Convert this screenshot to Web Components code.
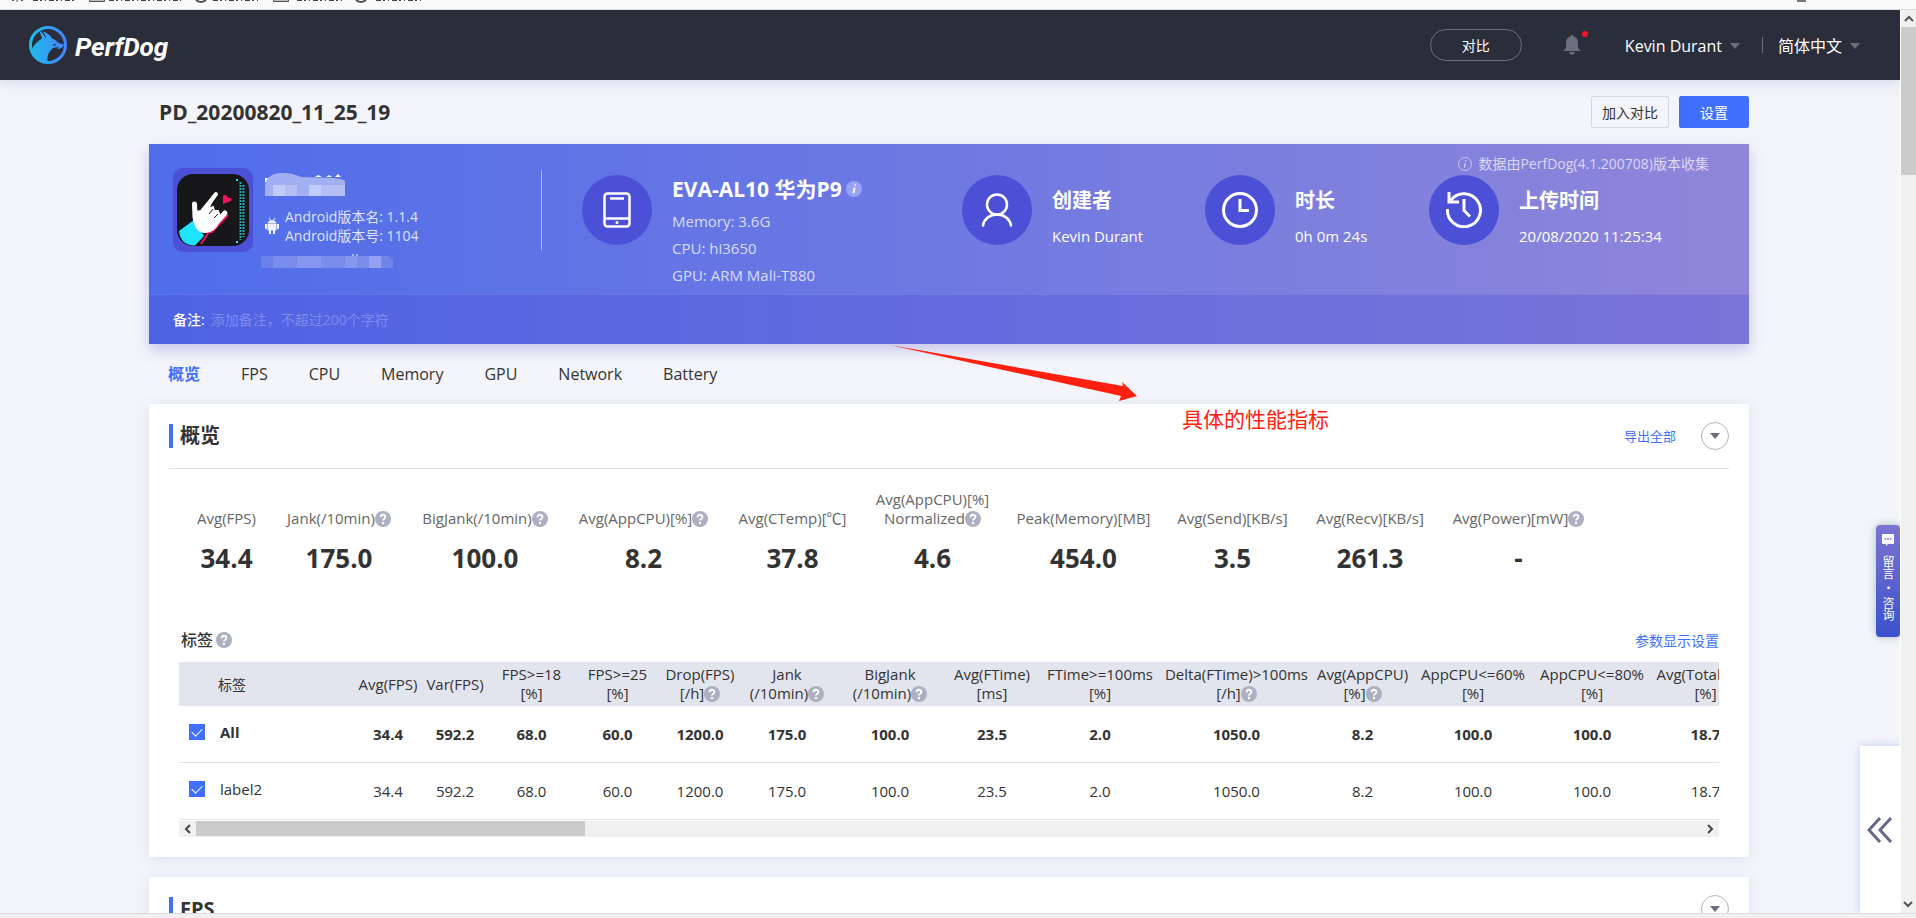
<!DOCTYPE html>
<html lang="zh-CN">
<head>
<meta charset="utf-8">
<title>PerfDog - PD_20200820_11_25_19</title>
<style>
html, body { margin: 0; height: 100%; }
body { font-family: "Open Sans", "Noto Sans CJK SC", sans-serif; font-size: 14px; line-height: 19px; color: #333; background: #f4f5fa; overflow: hidden; }
</style>
</head>
<body>
<perf-app></perf-app>
<script>
const define = (name, html, setup) => {
  const tpl = document.createElement('template');
  tpl.innerHTML = '<style>*{box-sizing:border-box}button,input,select{font:inherit;color:inherit;margin:0}a{text-decoration:none}svg{display:block}</style>' + html;
  customElements.define(name, class extends HTMLElement {
    constructor() {
      super();
      this.attachShadow({ mode: 'open' }).append(tpl.content.cloneNode(true));
    }
    connectedCallback() { if (setup && !this.ready) { this.ready = true; setup(this, this.shadowRoot); } }
  });
};

/* Round question mark beside a metric name */
define('help-icon', `
<style>:host{display:inline-block;width:16px;height:16px;vertical-align:-3px}</style>
<svg width="16" height="16" viewBox="0 0 16 16"><circle cx="8" cy="8" r="8" fill="#acb0c0"/><path d="M5.6 6.2C5.6 3 10.4 3 10.4 6C10.4 7.8 8 7.7 8 9.6" fill="none" stroke="#fff" stroke-width="1.9"/><circle cx="8" cy="12" r="1.2" fill="#fff"/></svg>`);

/* Lower edge of the browser's bookmark bar */
define('bookmark-strip', `
<style>:host{display:block;height:10px;background:#fafafa;border-bottom:1px solid #dcdde0;overflow:hidden;grid-column:1/-1}
svg{width:1916px}</style>
<svg height="9" viewBox="0 0 1916 9" fill="none" stroke="#555">
<path d="M12 .5h2M17 0v2M21 .5h2" /><path d="M33 .5h42M109 .5h72M213 .5h48M297 .5h45M376 .5h46" stroke="#444" stroke-dasharray="5 2 2 3 1 3"/>
<path d="M89.500 0v1.500h15V0M273.500 0v1.500h15V0" fill="#bbb"/>
<path d="M196 0q5 4 10 0M356 0q5 4 10 0" stroke-width="2"/><path d="M1797 1h9" stroke="#777" stroke-width="2"/></svg>`);

define('brand-logo', `
<style>:host{display:flex;align-items:center;gap:8px}
span{font:italic 700 26px/34px Roboto,"Open Sans",sans-serif;color:#fff;padding-top:4px}</style>
<svg width="38" height="38" viewBox="0 0 38 38">
<defs><linearGradient id="g"><stop offset="0" stop-color="#21b9e9"/><stop offset="1" stop-color="#4486ff"/></linearGradient></defs>
<circle cx="19" cy="19" r="17.500" fill="none" stroke="url(#g)" stroke-width="3"/>
<path d="M3 24C5 18 9 15 13 12.500L10.500 5C13 6 14.500 8 16 11L17 12C16.500 9 15 7 13.500 5.500C18 6.500 21 9 23 12.500C27 13.500 29 17 31 17.500L35 18.500C34 22 31 23 28 23L30 21.500C26 21 24 22 22 24C19 27 18 31 18.500 36C10 36 4 31 3 24Z" fill="url(#g)"/>
<path d="M23.500 19l4-1.500-2 2.500z" fill="#2a2d3a"/></svg>
<span>PerfDog</span>`);

define('top-bar', `
<style>:host{display:flex;align-items:center;height:70px;padding:0 40px 0 29px;background:#2a2d3a;color:#fff;position:relative;z-index:2;box-shadow:0 2px 14px rgba(70,80,170,.2)}
brand-logo{margin-right:auto}
button{background:none;border:0;padding:0}
.cmp{width:92px;height:32px;border:1px solid #6c6e80;border-radius:16px;font-size:14px}
.bell{position:relative;margin:0 44px 0 41px;width:18px}
.bell i{position:absolute;right:-7px;top:-4px;width:6px;height:6px;border-radius:50%;background:#f5122f}
.user{display:flex;align-items:center;gap:8px;font-size:16px;line-height:24px;padding-top:2px}
.tri{width:0;border:5px solid transparent;border-top:6px solid #6c6e80;border-bottom:0}
.sep{width:1px;height:16px;background:#6c6e80;margin:0 15px 0 22px}
label{display:flex;align-items:center;padding-top:2px}
select{appearance:none;background:none;border:0;font-size:16px;line-height:24px;padding:0;width:72px}</style>
<brand-logo></brand-logo>
<button class="cmp">对比</button>
<button class="bell" aria-label="notifications"><svg width="18" height="20" viewBox="0 0 18 20" fill="#6c6e80"><path d="M9 0c1 0 1.500.6 1.600 1.500C13.700 2.200 15 4.500 15 7.500V13l3 3H0l3-3V7.500C3 4.500 4.300 2.200 7.400 1.500 7.500.6 8 0 9 0zM6 17h6c-.5 3.500-5.500 3.500-6 0z"/></svg><i></i></button>
<button class="user">Kevin Durant<span class="tri"></span></button>
<span class="sep"></span>
<label><select aria-label="language"><option>简体中文</option></select><span class="tri"></span></label>`);

define('page-title', `
<style>:host{display:flex;align-items:center;gap:10px;height:64px;padding-left:10px}
h1{margin:0 auto 0 0;font-size:21px;line-height:28px}
button{height:32px;border-radius:2px;border:1px solid #d4d6df;background:none;width:78px;padding:0}
.main{width:70px;background:#4170ff;border-color:#4170ff;color:#fff}</style>
<h1>PD_20200820_11_25_19</h1><button>加入对比</button><button class="main">设置</button>`);

/* Round icon beside a heading and its detail lines */
define('info-block', `
<style>:host{display:flex;gap:20px;padding-top:31px;color:#fff;min-width:0}
.disc{flex:none;width:70px;height:70px;border-radius:50%;background:#4b50d6;display:grid;place-items:center}
.text{white-space:nowrap;padding-top:12px}
:host([rich]) .text{padding-top:0}
h2{margin:0 0 9px;font-size:20px;line-height:28px;display:flex;align-items:center;gap:4px}
:host([rich]) h2{margin-bottom:5px;font-size:21px}
:host([rich]) .body{line-height:27px;color:rgba(255,255,255,.75)}
.body{font-size:15px;line-height:24px}</style>
<div class="disc"><slot name="icon"></slot></div>
<div class="text"><h2><slot name="title"></slot></h2><div class="body"><slot></slot></div></div>`);

define('app-block', `
<style>:host{display:flex;padding:24px 0 0 24px}
.icon{width:80px;height:84px;border-radius:10px;background:#4b50d6;display:grid;place-items:center;flex:none}
.text{flex:1;padding:5px 0 0 8px;color:rgba(255,255,255,.82);white-space:nowrap}
.line{display:flex;align-items:center;gap:6px;padding:11px 0 0 4px}
.rule{width:1px;height:80px;background:rgba(255,255,255,.5);margin:2px 40px 0 0}
.name{margin-left:4px}.pkg{margin-top:9px}</style>
<div class="icon"><svg width="72" height="72" viewBox="0 0 72 72"><rect width="72" height="72" rx="16" fill="#171719"/>
<path d="M2 57L17 46 27 62 18 71.500C8 71.500 3 66 2 57Z" fill="#20e4ff"/><path d="M24 70l8-12h3l16-17" fill="none" stroke="#f4145e" stroke-width="2"/>
<path d="M17.500 30L18 43Q20 57 29 56.500 36 56 40 48L48 39" fill="none" stroke="#fff" stroke-width="5" stroke-linecap="round" stroke-linejoin="round"/>
<path d="M18 38L24 37 38 20 31 35 36 33 37 37 41 37 43 43 35 55 24 56Z" fill="#fff" stroke="#fff" stroke-width="2"/><path d="M26 38L39 20" stroke="#fff" stroke-width="4" stroke-linecap="round"/>
<path d="M32 40l4-5M37 44l4-4" stroke="#171719" stroke-width="1"/>
<path d="M46 22q4-3 5 2 5-1 3 3l-8 3z" fill="#f4145e"/>
<path d="M63.500 8v58M66.500 11v52" stroke="#20a9b4" stroke-width="2" stroke-dasharray="2 1"/><path d="M59 6h2M59 68h2" stroke="#20e4ff" stroke-width="2"/></svg></div>
<div class="text">
<svg class="name" width="80" height="23" viewBox="0 0 80 23"><path d="M0 5h4v4H0zM0 13h3v3H0zM0 19h5v3H0zM50 4l3-2 4 2zM61 4l3-2 3 2zM70 4l3-3 3 3z" fill="#fff"/><path d="M0 23V11Q3 0 17 0Q28 0 36 4L68 5Q78 6 80 8V23Z" fill="#a2aff2"/><path d="M8 12h12v11H8zM44 12h12v11H44z" fill="#c3cbf8"/><path d="M20 12h12v11H20zM56 12h12v11H56zM68 12h12v11H68z" fill="#b4bef5"/></svg>
<div class="line"><svg width="14" height="16" viewBox="0 0 14 16" fill="#eef0ff"><path d="M2.500 5.500C2.500 1 11.500 1 11.500 5.500zM2.500 6h9v6.500h-9zM0 6h2v5H0zM12 6h2v5h-2zM4 12h2v4H4zM8 12h2v4H8z"/><path d="M4 0l2 3M10 0L8 3" stroke="#eef0ff"/></svg><div>Android版本名: 1.1.4<br>Android版本号: 1104</div></div>
<svg class="pkg" width="132" height="14" viewBox="0 0 132 14"><path d="M91 1h2M95 1h2" stroke="#fff"/><path d="M0 2h12v12H0z" fill="#6c80ea"/><path d="M12 2h24v12H12zM60 2h24v12H60zM96 2h12v12H96z" fill="#7b8dec"/><path d="M36 2h24v12H36zM84 2h12v12H84z" fill="#8796ee"/><path d="M108 2h12v12h-12z" fill="#93a1f0"/><path d="M120 2h8l4 4v8h-12z" fill="#7284e9"/></svg>
</div><div class="rule"></div>`);

define('session-banner', `
<style>:host{display:block;position:relative;background:linear-gradient(90deg,#4f6dea,#6f79e2 50%,#8f86d9);box-shadow:0 6px 14px rgba(80,75,200,.28)}
.grid{display:grid;grid-template-columns:433fr 380fr 243fr 224fr 320fr;height:150px}
.ver{position:absolute;right:40px;top:10px;display:flex;align-items:center;gap:6px;color:rgba(255,255,255,.7);line-height:20px}
label{display:flex;align-items:center;height:50px;padding:0 24px;background:rgba(75,75,214,.3);border-top:1px solid rgba(255,255,255,.1);color:#fff;gap:6px;font-weight:500}
input{flex:1;border:0;background:none;padding:0;outline:0;font-weight:400}
input::placeholder{color:#7f8cee;opacity:1}</style>
<div class="grid">
<app-block></app-block>
<info-block rich><svg slot="icon" width="28" height="36" viewBox="0 0 28 36" fill="none" stroke="#fff" stroke-width="2.500"><rect x="1.500" y="1.500" width="25" height="33" rx="3"/><path d="M7 6.500h14M1 26.500h26"/><circle cx="14" cy="30.500" r="1.500" fill="#fff" stroke="none"/></svg>
<span slot="title">EVA-AL10 华为P9</span><svg slot="title" width="16" height="16" viewBox="0 0 16 16"><circle cx="8" cy="8" r="8" fill="#99a3f5"/><path d="M9.300 3.400l-.3 1.200M8.700 6.500L7.400 12.200" stroke="#fff" stroke-width="1.800"/></svg>
Memory: 3.6G<br>CPU: hi3650<br>GPU: ARM Mali-T880</info-block>
<info-block><svg slot="icon" width="32" height="34" viewBox="0 0 32 34" fill="none" stroke="#fff" stroke-width="2.500" stroke-linecap="round"><ellipse cx="16" cy="11.500" rx="10" ry="10"/><path d="M2 32.500C3 26 9 21.500 16 21.500S29 26 30 32.500"/></svg><span slot="title">创建者</span>Kevin Durant</info-block>
<info-block><svg slot="icon" width="36" height="36" viewBox="0 0 36 36" fill="none" stroke="#fff" stroke-width="3"><circle cx="18" cy="18" r="16.500"/><path d="M18 7v11.500h9"/></svg><span slot="title">时长</span>0h 0m 24s</info-block>
<info-block><svg slot="icon" width="36" height="36" viewBox="0 0 36 36" fill="none" stroke="#fff" stroke-width="3"><path d="M1.500 17A16.500 16.500 0 1 0 5 8M3 0v10h10M18 7v11.500l6 6"/></svg><span slot="title">上传时间</span>20/08/2020 11:25:34</info-block>
</div>
<div class="ver"><svg width="14" height="14" viewBox="0 0 14 14" fill="none" stroke="#c6c4ee"><circle cx="7" cy="7" r="6.500"/><path d="M7.800 3.200l-.3 1.200M7.200 6L6.400 10.800" stroke-width="1.400"/></svg>数据由PerfDog(4.1.200708)版本收集</div>
<label>备注:<input placeholder="添加备注，不超过200个字符"></label>`);

define('section-tabs', `
<style>:host{display:block}nav{display:flex;gap:41px;height:60px;padding:0 19px;align-items:center;font-size:16px;line-height:24px}
a{color:#333}.on{color:#4170ff;font-weight:600}</style>
<nav><a href="#all" class="on">概览</a><a href="#fps">FPS</a><a href="#cpu">CPU</a><a href="#memory">Memory</a><a href="#gpu">GPU</a><a href="#network">Network</a><a href="#battery">Battery</a></nav>`);

define('perf-card', `
<style>:host{display:block;background:#fff;padding:0 20px 20px;box-shadow:0 2px 14px rgba(70,90,190,.13);margin-bottom:20px}
header{display:flex;align-items:center;height:65px;border-bottom:1px solid #e3e5ee}
i{width:4px;height:24px;background:#4170ff;margin-right:7px}
h2{margin:0 auto 0 0;font-size:20px;line-height:28px}
button{width:28px;height:28px;border:1px solid #b1b4c4;border-radius:50%;background:none;padding:0;display:grid;place-items:center;margin-left:25px}
b{border:5px solid transparent;border-top:6px solid #6a6d80;border-bottom:0}</style>
<header><i></i><h2><slot name="title"></slot></h2><slot name="action"></slot><button aria-label="collapse"><b></b></button></header><slot></slot>`);

define('metric-item', `
<style>:host{display:flex;flex-direction:column;align-items:center;justify-content:flex-end;text-align:center;white-space:nowrap;color:#666;font-size:15px}
strong{font-size:26px;line-height:32px;margin-top:14px;color:#333}</style>
<div><slot></slot></div><strong></strong>`, (el, root) => root.querySelector('strong').textContent = el.getAttribute('value'));

define('metric-row', `
<style>:host{display:grid;grid-template-columns:59px 106px 126px 131px 107px 113px 129px 109px 106px 131px;gap:30px;padding:21px 0 0 28px}</style>
<metric-item value="34.4">Avg(FPS)</metric-item><metric-item value="175.0">Jank(/10min)<help-icon></help-icon></metric-item><metric-item value="100.0">BigJank(/10min)<help-icon></help-icon></metric-item><metric-item value="8.2">Avg(AppCPU)[%]<help-icon></help-icon></metric-item><metric-item value="37.8">Avg(CTemp)[℃]</metric-item><metric-item value="4.6">Avg(AppCPU)[%]<br>Normalized<help-icon></help-icon></metric-item><metric-item value="454.0">Peak(Memory)[MB]</metric-item><metric-item value="3.5">Avg(Send)[KB/s]</metric-item><metric-item value="261.3">Avg(Recv)[KB/s]</metric-item><metric-item value="-">Avg(Power)[mW]<help-icon></help-icon></metric-item>`);

define('label-table', `
<style>:host{display:block;padding:0 10px}
.head{display:flex;justify-content:space-between;align-items:center;height:44px;padding-left:2px}
h3{margin:0;font-size:16px;line-height:24px;font-weight:500;display:flex;align-items:center;gap:3px}a{color:#4170ff}
.view{overflow:hidden}
table{border-collapse:separate;border-spacing:0;table-layout:fixed;width:1580px}
th,td{padding:0;text-align:center;white-space:nowrap;font-size:15px}
thead th{background:#e3e5ee;height:44px;font-weight:400;line-height:19px}
thead th:first-child{text-align:left;padding-left:39px;font-size:14px}
tbody th,tbody td{height:57px;border-bottom:1px solid #e3e5ee}
tbody th{text-align:left;font-weight:400}
tbody label{display:flex;align-items:center;gap:15px;padding:0 0 4px 10px}
tbody tr:first-child *{font-weight:700}
input{appearance:none;width:16px;height:16px;background:#4170ff;display:grid;place-items:center}
input:checked::before{content:"";width:9px;height:5px;border:solid #fff;border-width:0 0 1px 1px;rotate:-45deg;margin-top:-3px}
.bar{display:flex;align-items:center;height:16px;background:#f0f0f0;margin-top:1px}
.bar svg{flex:none}.bar div{width:389px;height:15px;background:#cbcbcb;margin:0 auto 1px 0}</style>
<div class="head"><h3>标签<help-icon></help-icon></h3><a href="#params">参数显示设置</a></div>
<div class="view"><table><colgroup></colgroup><thead><tr></tr></thead><tbody></tbody></table></div>
<div class="bar"><svg width="17" height="16" fill="none" stroke="#444" stroke-width="2"><path d="M11 4L7 8l4 4"/></svg><div></div><svg width="17" height="16" fill="none" stroke="#444" stroke-width="2"><path d="M6 4l4 4-4 4"/></svg></div>`, (el, root) => {
  const q = '<help-icon></help-icon>';
  const cols = [['标签', 175], ['Avg(FPS)', 68, 34.4], ['Var(FPS)', 66, 592.2], ['FPS&gt;=18<br>[%]', 87, 68], ['FPS&gt;=25<br>[%]', 85, 60], ['Drop(FPS)<br>[/h]' + q, 80, 1200], ['Jank<br>(/10min)' + q, 94, 175], ['BigJank<br>(/10min)' + q, 112, 100], ['Avg(FTime)<br>[ms]', 92, 23.5], ['FTime&gt;=100ms<br>[%]', 124, 2], ['Delta(FTime)&gt;100ms<br>[/h]' + q, 149, 1050], ['Avg(AppCPU)<br>[%]' + q, 103, 8.2], ['AppCPU&lt;=60%<br>[%]', 118, 100], ['AppCPU&lt;=80%<br>[%]', 120, 100], ['Avg(TotalCPU)<br>[%]', 107, 18.7]];
  root.querySelector('colgroup').innerHTML = cols.map(c => `<col style="width:${c[1]}px">`).join('');
  root.querySelector('thead tr').innerHTML = cols.map(c => `<th scope="col">${c[0]}</th>`).join('');
  root.querySelector('tbody').innerHTML = ['All', 'label2'].map(n => `<tr><th scope="row"><label><input type="checkbox" checked>${n}</label></th>${cols.slice(1).map(c => `<td>${c[2].toFixed(1)}</td>`).join('')}</tr>`).join('');
});

/* Red arrow with a caption, laid over the tabs and the overview card */
define('callout-note', `
<style>:host{position:absolute;left:741px;top:200px;color:#ff2010;font-size:21px;line-height:30px;font-weight:400;pointer-events:none}
span{display:block;margin:3px 0 0 292px;white-space:nowrap}</style>
<svg width="248" height="57" viewBox="0 0 248 57"><path d="M0 1L233 42 232 38 247 52 229 57 231 52Z" fill="#ff2010"/></svg><span>具体的性能指标</span>`);

define('chat-tab', `
<style>:host{position:absolute;right:0;top:515px;z-index:3}
button{width:24px;height:112px;border:0;border-radius:4px;background:linear-gradient(#7b74cf,#3b51cc);box-shadow:0 0 8px rgba(40,110,110,.4);color:#fff;padding:9px 0 0;display:flex;flex-direction:column;align-items:center;gap:9px;font-size:12px;line-height:16px}
.v{writing-mode:vertical-rl;text-orientation:upright;white-space:nowrap;font-family:"Noto Sans CJK SC",sans-serif;display:flex;gap:3px}</style>
<button><svg width="12" height="12" viewBox="0 0 12 12"><path d="M1 0h10q1 0 1 1v8q0 1-1 1H6l-2 2v-2H1Q0 10 0 9V1Q0 0 1 0z" fill="#fff"/><path d="M2.500 5h1.600M5.200 5h1.600M7.900 5h1.600" stroke="#6665cc" stroke-width="1.600"/></svg><span class="v"><span>留言</span><span>·</span><span>咨询</span></span></button>`);

define('drawer-handle', `
<style>:host{position:absolute;right:0;top:736px;bottom:0;z-index:3}
button{width:40px;height:100%;border:0;background:#fff;box-shadow:0 0 10px rgba(65,112,255,.3);padding:0;display:grid;place-items:center}</style>
<button aria-label="expand"><svg width="26" height="26" viewBox="0 0 26 26" fill="none" stroke="#666a83" stroke-width="3"><path d="M13 1L2 13l11 12M24 1L13 13l11 12"/></svg></button>`);

define('window-scrollbar', `
<style>:host{display:flex;flex-direction:column;align-items:center;background:#f0f0f0;border-left:1px solid #fff}
div{width:100%;height:148px;background:#cbcbcb;margin-bottom:auto}</style>
<svg width="15" height="17" fill="none" stroke="#555" stroke-width="2"><path d="M4 11l4-4 4 4"/></svg><div></div><svg width="15" height="17" fill="none" stroke="#555" stroke-width="2"><path d="M3 6l4 4 4-4"/></svg>`);

define('perf-app', `
<style>:host{display:grid;grid-template:auto minmax(0,1fr) auto/minmax(0,1fr) 16px;height:100vh}
.page{position:relative;overflow:hidden}
main{max-width:1600px;margin:0 auto}
.wrap{padding-right:2px}
.over{position:relative}
a{color:#4170ff;font-size:13px}
footer{grid-column:1/-1;height:5px;background:#f0f0f0;border-top:1px solid #dadbe0}
label-table{margin-top:44px}</style>
<bookmark-strip></bookmark-strip>
<div class="page"><top-bar></top-bar><div class="wrap"><main><page-title></page-title><div class="over"><session-banner></session-banner><section-tabs></section-tabs>
<perf-card id="all"><span slot="title">概览</span><a slot="action" href="#export">导出全部</a><metric-row></metric-row><label-table></label-table></perf-card>
<callout-note></callout-note></div>
<perf-card id="fps"><span slot="title">FPS</span></perf-card></main></div>
<chat-tab></chat-tab><drawer-handle></drawer-handle></div>
<window-scrollbar></window-scrollbar><footer></footer>`);
</script>
</body>
</html>
